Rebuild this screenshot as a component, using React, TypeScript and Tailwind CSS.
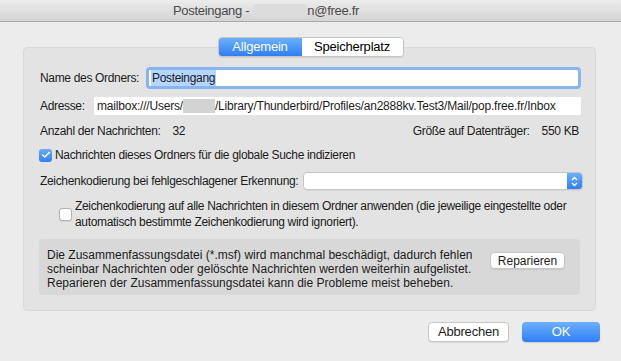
import { Check } from 'lucide-react';

function Checkbox({ checked }: { checked: boolean }) {
  return checked ? (
    <span className="flex h-[13px] w-[13px] shrink-0 items-center justify-center rounded-[3px] bg-gradient-to-b from-[#6aacf9] to-[#2f7ff6]">
      <Check className="h-[10px] w-[10px] text-white" strokeWidth={3.5} />
    </span>
  ) : (
    <span className="block h-[13px] w-[13px] shrink-0 rounded-[3px] border border-[#b4b4b4] bg-white shadow-[0_1px_1px_rgba(0,0,0,0.08)]" />
  );
}

export default function App() {
  return (
    <div
      className="flex h-[361px] w-[621px] flex-col overflow-hidden whitespace-nowrap bg-[#ececec] text-[12px] tracking-[-0.33px] text-[#1c1c1c]"
      style={{ fontFamily: '"Liberation Sans", Arial, sans-serif' }}
    >
      {/* Title bar */}
      <div className="flex h-[22px] shrink-0 items-center border-b border-[#a9a9a9] bg-gradient-to-b from-[#ececec] to-[#d4d4d4] pl-[173px] text-[13px] tracking-[-0.3px] text-[#4a4a4a]">
        <span>Posteingang -</span>
        <span className="ml-[4px] h-[14px] w-[54px] rounded-[3px] bg-[#dcdcdc]" />
        <span>n@free.fr</span>
      </div>

      {/* Tabs */}
      <div className="relative z-10 mt-[15px] flex justify-center">
        <div className="flex h-[20px] overflow-hidden rounded-[4px] border border-[#c4c4c4] text-[13px] tracking-[-0.2px] shadow-[0_1px_1px_rgba(0,0,0,0.08)]">
          <div className="flex w-[83px] items-center justify-center bg-gradient-to-b from-[#6cb0fb] to-[#2f7df6] text-white">
            Allgemein
          </div>
          <div className="flex w-[101px] items-center justify-center bg-white text-black">Speicherplatz</div>
        </div>
      </div>

      {/* Panel */}
      <div className="-mt-[10px] ml-[23px] mr-[25px] flex flex-col rounded-[4px] border border-[#d9d9d9] bg-[#e3e3e3] pb-[15px] pl-[15px] pr-[14px] pt-[19px]">
        {/* Name */}
        <div className="flex h-[22px] items-center">
          <span className="w-[107px] shrink-0 pl-[1px]">Name des Ordners:</span>
          <div className="flex h-[22px] flex-1 items-center rounded-[4px] border-[3px] border-[#8ab4ef] bg-white pl-[2px]">
            <span className="bg-[#b4d5fe] px-[1px] leading-[16px]">Posteingang</span>
          </div>
        </div>

        {/* Address */}
        <div className="mt-[8px] flex h-[18px] items-center">
          <span className="w-[55px] shrink-0 pl-[1px]">Adresse:</span>
          <div className="flex h-[18px] flex-1 items-center overflow-hidden bg-white pl-[3px] tracking-[-0.2px]">
            <span>mailbox:///Users/</span>
            <span className="h-[14px] w-[32px] bg-[#d3d3d3]" />
            <span>/Library/Thunderbird/Profiles/an2888kv.Test3/Mail/pop.free.fr/Inbox</span>
          </div>
        </div>

        {/* Counts */}
        <div className="mt-[8px] flex h-[16px] items-center justify-between pl-[1px] pr-[2px]">
          <div className="flex">
            <span>Anzahl der Nachrichten:</span>
            <span className="ml-[12px]">32</span>
          </div>
          <div className="flex">
            <span>Größe auf Datenträger:</span>
            <span className="ml-[12px]">550 KB</span>
          </div>
        </div>

        {/* Global search */}
        <div className="mt-[8px] flex h-[16px] items-center gap-[3px]">
          <Checkbox checked />
          <span>Nachrichten dieses Ordners für die globale Suche indizieren</span>
        </div>

        {/* Encoding */}
        <div className="mt-[9px] flex h-[18px] items-center">
          <span className="w-[264px] shrink-0 pl-[1px]">Zeichenkodierung bei fehlgeschlagener Erkennung:</span>
          <div className="-mr-[2px] flex h-[18px] flex-1 overflow-hidden rounded-[4px] border border-[#c6c6c6] bg-white shadow-[0_1px_1px_rgba(0,0,0,0.06)]">
            <div className="flex-1" />
            <div className="flex w-[15px] items-center justify-center bg-gradient-to-b from-[#6cb0fb] to-[#2f7df6]">
              <svg width="7" height="11" viewBox="0 0 7 11" fill="none" stroke="white" strokeWidth="1.4">
                <path d="M1 4 L3.5 1.5 L6 4" />
                <path d="M1 7 L3.5 9.5 L6 7" />
              </svg>
            </div>
          </div>
        </div>

        {/* Apply encoding */}
        <div className="mt-[8px] flex pl-[20px]">
          <div className="mt-[10px]">
            <Checkbox checked={false} />
          </div>
          <span className="ml-[3px] leading-[16px]">
            Zeichenkodierung auf alle Nachrichten in diesem Ordner anwenden (die jeweilige eingestellte oder
            <br />
            automatisch bestimmte Zeichenkodierung wird ignoriert).
          </span>
        </div>

        {/* Repair box */}
        <div className="mr-[1px] mt-[9px] flex h-[56px] items-start justify-between rounded-[4px] bg-[#d8d8d8] pl-[8px] pr-[15px] pt-[9px] leading-[14px] tracking-normal">
          <p>
            Die Zusammenfassungsdatei (*.msf) wird manchmal beschädigt, dadurch fehlen
            <br />
            scheinbar Nachrichten oder gelöschte Nachrichten werden weiterhin aufgelistet.
            <br />
            Reparieren der Zusammenfassungsdatei kann die Probleme meist beheben.
          </p>
          <button className="mt-[4px] flex h-[17px] w-[75px] items-center justify-center rounded-[4px] border border-[#c6c6c6] bg-white shadow-[0_1px_1px_rgba(0,0,0,0.08)]">
            Reparieren
          </button>
        </div>
      </div>

      {/* Buttons */}
      <div className="mt-[11px] flex justify-end gap-[13px] pr-[21px] text-[13px] tracking-[-0.2px]">
        <button className="flex h-[20px] w-[81px] items-center justify-center rounded-[4px] border border-[#c6c6c6] bg-white shadow-[0_1px_1px_rgba(0,0,0,0.08)]">
          Abbrechen
        </button>
        <button className="flex h-[20px] w-[78px] items-center justify-center rounded-[4px] bg-gradient-to-b from-[#6cb0fb] to-[#2f7df6] text-white shadow-[0_1px_1px_rgba(0,0,0,0.12)]">
          OK
        </button>
      </div>
    </div>
  );
}
